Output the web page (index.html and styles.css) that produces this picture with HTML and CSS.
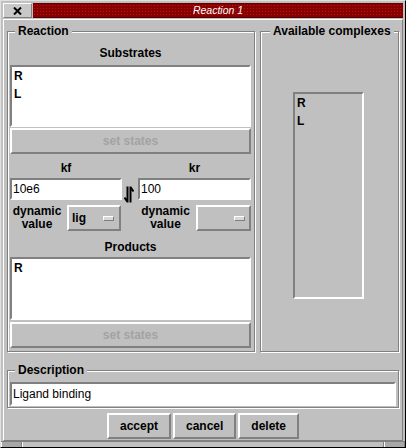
FILE: index.html
```html
<!DOCTYPE html>
<html>
<head>
<meta charset="utf-8">
<link rel="stylesheet" href="styles.css">
</head>
<body>
<div class="window">
  <div class="titlebar">
    <div class="close">
      <svg width="9" height="8" viewBox="0 0 9 8"><path d="M1 0.5 L8 7.5 M8 0.5 L1 7.5" stroke="#000" stroke-width="2"/></svg>
    </div>
    <div class="title">Reaction 1</div>
  </div>
  <div class="client">
    <div class="top-row">
      <div class="group reaction">
        <span class="legend">Reaction</span>
        <div class="label">Substrates</div>
        <div class="listbox list-sub">
          <div class="item">R</div>
          <div class="item">L</div>
        </div>
        <div class="button set">set states</div>
        <div class="rates">
          <div class="rate rate-f">
            <div class="rlabel">kf</div>
            <div class="entry rentry">10e6</div>
            <div class="dyn">
              <div class="dyn-label">dynamic<br>value</div>
              <div class="menubutton mb-f"><span class="mb-text">lig</span><span class="indicator"></span></div>
            </div>
          </div>
          <div class="arrow-col">
            <svg width="10" height="17" viewBox="0 0 10 17">
              <path d="M3.5 0.5 V16.5 M3.5 16 L0.5 11.5" stroke="#000" stroke-width="2" fill="none"/>
              <path d="M6.5 0.5 V16.5 M6.5 1 L9.5 5.5" stroke="#000" stroke-width="2" fill="none"/>
            </svg>
          </div>
          <div class="rate rate-r">
            <div class="rlabel">kr</div>
            <div class="entry rentry">100</div>
            <div class="dyn">
              <div class="dyn-label">dynamic<br>value</div>
              <div class="menubutton mb-r"><span class="mb-text"></span><span class="indicator"></span></div>
            </div>
          </div>
        </div>
        <div class="label products-label">Products</div>
        <div class="listbox list-prod">
          <div class="item">R</div>
        </div>
        <div class="button set set-prod">set states</div>
      </div>
      <div class="group available">
        <span class="legend legend-avail">Available complexes</span>
        <div class="listbox list-avail">
          <div class="item">R</div>
          <div class="item">L</div>
        </div>
      </div>
    </div>
    <div class="group description">
      <span class="legend">Description</span>
      <div class="entry desc-entry">Ligand binding</div>
    </div>
    <div class="buttons">
      <div class="button btn">accept</div>
      <div class="button btn">cancel</div>
      <div class="button btn">delete</div>
    </div>
  </div>
  <div class="resize">
    <div class="seg seg-corner"></div>
    <div class="seg seg-mid"></div>
    <div class="seg seg-corner"></div>
  </div>
</div>
</body>
</html>
```

FILE: styles.css
```css
* { box-sizing: border-box; }

body {
  margin: 0;
  width: 406px;
  height: 448px;
  overflow: hidden;
  background: #c0c0c0;
  font-family: "Liberation Sans", Arial, sans-serif;
  font-size: 12px;
  color: #000;
}

.window {
  width: 406px;
  height: 448px;
  display: flex;
  flex-direction: column;
  border: 1px solid;
  border-color: #e0e0e0 #000 #000 #e0e0e0;
  padding: 2px 2px 0 2px;
  background: #c0c0c0;
}

.titlebar {
  display: flex;
  height: 15px;
  gap: 1px;
}

.close {
  width: 29px;
  height: 15px;
  border: 1px solid;
  border-color: #fff #808080 #808080 #fff;
  background: #c8c8c8;
  display: flex;
  align-items: center;
  justify-content: center;
}

.title {
  flex: 1;
  background-color: #880000;
  background-image: radial-gradient(circle, #b01818 0.7px, transparent 0.9px);
  background-size: 3px 3px;
  color: #fff;
  font-style: italic;
  font-size: 10.5px;
  line-height: 13px;
  text-align: center;
  border-bottom: 1px solid #500000;
  border-top: 1px solid #600000;
}

.client {
  margin-top: 1px;
  height: 422px;
  border: 1px solid;
  border-color: #fff #808080 #808080 #fff;
  padding: 11px 3px 1px 3px;
  display: flex;
  flex-direction: column;
}

.top-row {
  display: flex;
  height: 321px;
  gap: 5px;
}

.group {
  position: relative;
  border: 1px solid #808080;
  box-shadow: inset 1px 1px 0 #fff, 1px 1px 0 #fff;
}

.legend {
  position: absolute;
  top: -8px;
  left: 7px;
  padding: 0 3px;
  background: #c0c0c0;
  font-weight: bold;
  line-height: 14px;
  white-space: nowrap;
}

.legend-avail { left: 9px; }

.reaction {
  width: 248px;
  display: flex;
  flex-direction: column;
  padding: 14px 0 0 2px;
}

.available {
  width: 139px;
}

.label {
  width: 241px;
  height: 14px;
  line-height: 14px;
  text-align: center;
  font-weight: bold;
}

.listbox {
  background: #fff;
  border: 2px solid;
  border-color: #808080 #fff #fff #808080;
  padding: 0 2px;
}

.item {
  line-height: 18px;
  font-weight: bold;
}

.list-sub {
  margin-top: 5px;
  width: 241px;
  height: 62px;
}

.button {
  border: 2px solid;
  border-color: #fff #808080 #808080 #fff;
  background: #c0c0c0;
  font-weight: bold;
  text-align: center;
  line-height: 22px;
  height: 26px;
}

.set {
  width: 241px;
  margin-top: 1px;
  color: #a3a3a3;
}

.set-prod { margin-top: 2px; }

.rates {
  display: flex;
  margin-top: 7px;
}

.rate {
  display: flex;
  flex-direction: column;
}

.rate-f { width: 112px; }
.rate-r { width: 113px; }

.rlabel {
  height: 14px;
  line-height: 14px;
  text-align: center;
  font-weight: bold;
}

.entry {
  background: #fff;
  border: 2px solid;
  border-color: #808080 #fff #fff #808080;
  padding: 0 1px;
  white-space: nowrap;
}

.rentry {
  margin-top: 3px;
  height: 22px;
  line-height: 18px;
}

.arrow-col {
  width: 16px;
  padding: 25px 0 0 2px;
}

.arrow-col svg { display: block; }

.dyn {
  display: flex;
  margin-top: 5px;
  height: 26px;
  gap: 3px;
}

.dyn-label {
  flex: 1;
  text-align: center;
  font-weight: bold;
  line-height: 13px;
}

.menubutton {
  display: flex;
  align-items: center;
  justify-content: space-between;
  border: 2px solid;
  border-color: #fff #808080 #808080 #fff;
  padding: 0 5px 0 3px;
  font-weight: bold;
}

.mb-f { width: 54px; margin-right: 1px; padding-right: 5px; }
.mb-r { width: 55px; padding-right: 4px; }

.indicator {
  width: 11px;
  height: 5px;
  border: 1px solid;
  border-color: #fff #808080 #808080 #fff;
  background: #d8d8d8;
}

.products-label { margin-top: 9px; }

.list-prod {
  margin-top: 3px;
  width: 241px;
  height: 63px;
}

.list-avail {
  margin: 60px 0 0 32px;
  width: 71px;
  height: 207px;
  background: #c0c0c0;
}

.description {
  margin-top: 18px;
  height: 38px;
  padding: 11px 2px 0 2px;
}

.desc-entry {
  height: 24px;
  line-height: 21px;
}

.buttons {
  margin-top: 5px;
  display: flex;
  justify-content: center;
  gap: 2px;
}

.btn {
  padding: 0 11px;
  color: #000;
}

.resize {
  display: flex;
  height: 6px;
  margin: 0 -2px;
  border-top: 1px solid #808080;
}

.seg {
  height: 5px;
  border-left: 1px solid #fff;
  border-right: 1px solid #808080;
}

.seg-corner {
  width: 21px;
  background: #a8a8a8;
}

.seg-mid {
  flex: 1;
  background: #c0c0c0;
}
```
